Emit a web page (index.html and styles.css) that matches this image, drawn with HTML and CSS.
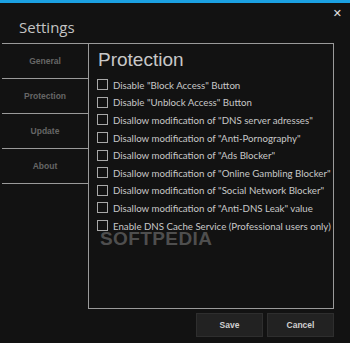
FILE: index.html
```html
<!DOCTYPE html>
<html lang="en">
<head>
    <meta charset="UTF-8">
    <meta name="viewport" content="width=device-width, initial-scale=1.0">
    <title>Settings</title>
    <link rel="stylesheet" href="styles.css">
</head>
<body>
    <header class="title-bar">
        <h1>Settings</h1>
        <span class="close">&#x2715;</span>
    </header>
    <main class="settings">
        <nav class="tabs">
            <div class="tab">General</div>
            <div class="tab">Protection</div>
            <div class="tab">Update</div>
            <div class="tab">About</div>
        </nav>
        <section class="panel">
            <h2>Protection</h2>
            <ul class="options">
                <li><span class="box"></span>Disable "Block Access" Button</li>
                <li><span class="box"></span>Disable "Unblock Access" Button</li>
                <li><span class="box"></span>Disallow modification of "DNS server adresses"</li>
                <li><span class="box"></span>Disallow modification of "Anti-Pornography"</li>
                <li><span class="box"></span>Disallow modification of "Ads Blocker"</li>
                <li><span class="box"></span>Disallow modification of "Online Gambling Blocker"</li>
                <li><span class="box"></span>Disallow modification of "Social Network Blocker"</li>
                <li><span class="box"></span>Disallow modification of "Anti-DNS Leak" value</li>
                <li><span class="box"></span>Enable DNS Cache Service (Professional users only)</li>
            </ul>
            <div class="watermark">SOFTPEDIA</div>
        </section>
    </main>
    <footer class="actions">
        <button>Save</button>
        <button>Cancel</button>
    </footer>
</body>
</html>
```

FILE: styles.css
```css
body {
    margin: 0;
    height: 340px;
    background: #121212;
    border-top: 3px solid #1ba1e2;
    font-family: 'Lato', sans-serif;
    color: #c8c8c8;
    overflow: hidden;
}
.title-bar {
    height: 40px;
    position: relative;
}
.title-bar h1 {
    margin: 0;
    padding: 14px 0 0 19px;
    font-family: 'Open Sans', sans-serif;
    font-weight: normal;
    font-size: 15px;
    line-height: 20px;
    color: #c4c4c4;
}
.close {
    position: absolute;
    top: 4px;
    right: 8px;
    font-size: 11px;
    font-weight: bold;
    color: #e0e0e0;
    font-family: 'DejaVu Sans', sans-serif;
}
.settings {
    display: flex;
    margin-left: 2px;
    width: 332px;
    height: 265px;
    border-top: 1px solid #9a9a9a;
}
.tabs {
    width: 86px;
    flex-shrink: 0;
    border-right: 1px solid #9a9a9a;
}
.tab {
    height: 34px;
    border-bottom: 1px solid #9a9a9a;
    display: flex;
    align-items: center;
    justify-content: center;
    font-family: 'Liberation Sans', sans-serif;
    font-weight: bold;
    font-size: 8.5px;
    color: #666;
}
.panel {
    flex: 1;
    min-width: 0;
    border-right: 1px solid #9a9a9a;
    border-bottom: 1px solid #9a9a9a;
    padding: 4px 0 0 8px;
    position: relative;
}
.panel h2 {
    margin: 0 0 0 1px;
    font-family: 'Liberation Sans', sans-serif;
    font-weight: normal;
    font-size: 19px;
    line-height: 24px;
    color: #c8c8c8;
}
.options {
    list-style: none;
    margin: 4px 0 0;
    padding: 0;
}
.options li {
    display: flex;
    align-items: center;
    height: 17.6px;
    font-size: 9.7px;
    white-space: nowrap;
}
.box {
    width: 9px;
    height: 9px;
    border: 1px solid #a8a8a8;
    margin-right: 5px;
    flex-shrink: 0;
}
.watermark {
    position: absolute;
    left: 11px;
    top: 184px;
    font-family: 'Liberation Sans', sans-serif;
    font-weight: bold;
    font-size: 19px;
    letter-spacing: 0.4px;
    color: rgba(95, 95, 95, 0.8);
}
.actions {
    display: flex;
    justify-content: flex-end;
    gap: 4px;
    width: 334px;
    margin-top: 4px;
}
button {
    width: 67px;
    height: 24px;
    background: #222;
    border: 1px solid #2e2e2e;
    color: #d0d0d0;
    font-family: 'Liberation Sans', sans-serif;
    font-weight: bold;
    font-size: 8.5px;
    padding: 0;
}
```
